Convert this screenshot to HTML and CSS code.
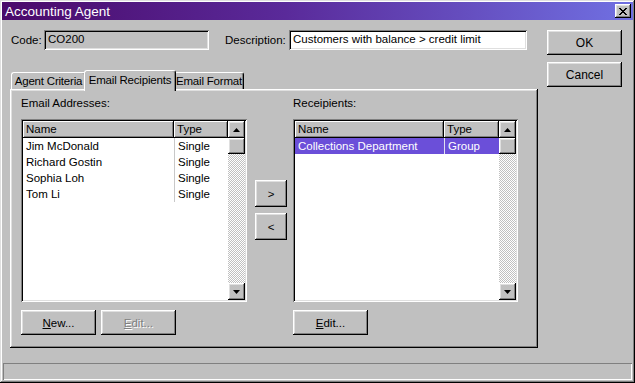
FILE: index.html
```html
<!DOCTYPE html>
<html lang="en">
<head>
    <meta charset="UTF-8">
    <title>Accounting Agent</title>
    <link rel="stylesheet" href="styles.css">
</head>
<body>
    <div class="window">
        <div class="titlebar">
            <div class="title">Accounting Agent</div>
            <div class="close bevel-up">
                <svg width="8" height="7" viewBox="0 0 8 7"><path d="M0 0L7 7M1 0L8 7M7 0L0 7M8 0L1 7" stroke="#000" stroke-width="1"/></svg>
            </div>
        </div>

        <div class="main">
            <div class="left">
                <div class="fields">
                    <span class="lbl code-lbl">Code:</span>
                    <div class="input code-input">CO200</div>
                    <span class="lbl desc-lbl">Description:</span>
                    <div class="input desc-input">Customers with balance &gt; credit limit</div>
                </div>

                <div class="tabs">
                    <div class="tab tab-criteria">Agent Criteria</div>
                    <div class="tab tab-recipients active">Email Recipients</div>
                    <div class="tab tab-format">Email Format</div>
                </div>

                <div class="panel bevel-up">
                    <div class="col col-left">
                        <div class="group-lbl">Email Addresses:</div>
                        <div class="listbox">
                            <div class="list-body">
                                <div class="list-head">
                                    <div class="hcell name">Name</div>
                                    <div class="hcell type">Type</div>
                                </div>
                                <div class="row"><div class="cell name">Jim McDonald</div><div class="cell type">Single</div></div>
                                <div class="row"><div class="cell name">Richard Gostin</div><div class="cell type">Single</div></div>
                                <div class="row"><div class="cell name">Sophia Loh</div><div class="cell type">Single</div></div>
                                <div class="row"><div class="cell name">Tom Li</div><div class="cell type">Single</div></div>
                            </div>
                            <div class="scrollbar">
                                <div class="sbtn bevel-up"><svg width="7" height="4" viewBox="0 0 7 4"><polygon points="3.5,0 7,4 0,4" fill="#000"/></svg></div>
                                <div class="thumb bevel-up"></div>
                                <div class="track"></div>
                                <div class="sbtn bevel-up"><svg width="7" height="4" viewBox="0 0 7 4"><polygon points="0,0 7,0 3.5,4" fill="#000"/></svg></div>
                            </div>
                        </div>
                        <div class="btn-row">
                            <div class="btn bevel-up"><u>N</u>ew...</div>
                            <div class="btn bevel-up disabled"><u>E</u>dit...</div>
                        </div>
                    </div>

                    <div class="col col-mid">
                        <div class="btn small bevel-up">&gt;</div>
                        <div class="btn small bevel-up">&lt;</div>
                    </div>

                    <div class="col col-right">
                        <div class="group-lbl">Receipients:</div>
                        <div class="listbox">
                            <div class="list-body">
                                <div class="list-head">
                                    <div class="hcell name">Name</div>
                                    <div class="hcell type">Type</div>
                                </div>
                                <div class="row selected"><div class="cell name">Collections Department</div><div class="cell type">Group</div></div>
                            </div>
                            <div class="scrollbar">
                                <div class="sbtn bevel-up"><svg width="7" height="4" viewBox="0 0 7 4"><polygon points="3.5,0 7,4 0,4" fill="#000"/></svg></div>
                                <div class="thumb bevel-up"></div>
                                <div class="track"></div>
                                <div class="sbtn bevel-up"><svg width="7" height="4" viewBox="0 0 7 4"><polygon points="0,0 7,0 3.5,4" fill="#000"/></svg></div>
                            </div>
                        </div>
                        <div class="btn-row">
                            <div class="btn bevel-up"><u>E</u>dit...</div>
                        </div>
                    </div>
                </div>
            </div>

            <div class="side">
                <div class="btn big bevel-up">OK</div>
                <div class="btn big bevel-up">Cancel</div>
            </div>
        </div>

        <div class="statusbar"></div>
    </div>
</body>
</html>
```

FILE: styles.css
```css
body {
    margin: 0;
    font-family: 'Liberation Sans', Arial, sans-serif;
    font-size: 11px;
    color: #000;
    background-color: #c0c0c0;
}

.window {
    width: 635px;
    height: 383px;
    box-sizing: border-box;
    padding: 2px;
    background-color: #c0c0c0;
    box-shadow: inset -1px -1px #000, inset 1px 1px #dfdfdf, inset -2px -2px #808080, inset 2px 2px #fff;
}

.bevel-up {
    background-color: #c0c0c0;
    box-shadow: inset -1px -1px #000, inset 1px 1px #fff, inset -2px -2px #808080, inset 2px 2px #dfdfdf;
}

.titlebar {
    height: 18px;
    display: flex;
    justify-content: space-between;
    align-items: center;
    padding: 0 2px 0 3px;
    background: linear-gradient(to right, #4a0a6a 0%, #5a2a9a 45%, #7070e2 100%);
}
.title {
    color: #fff;
    font-size: 13.5px;
}
.close {
    width: 16px;
    height: 14px;
    display: flex;
    align-items: center;
    justify-content: center;
}
.close svg { margin-left: -1px; }

.main {
    display: flex;
    padding: 10px 0 0 8px;
}
.left { width: 528px; }

.fields {
    height: 20px;
    display: flex;
    align-items: center;
}
.lbl { font-size: 11.5px; }
.code-lbl { width: 33px; padding-left: 1px; }
.desc-lbl { width: 64px; margin-left: 16px; }
.input {
    height: 20px;
    box-sizing: border-box;
    padding: 3px 4px;
    font-size: 11.5px;
    box-shadow: inset 1px 1px #808080, inset -1px -1px #fff, inset 2px 2px #000, inset -2px -2px #dfdfdf;
}
.code-input { width: 165px; background-color: #c0c0c0; }
.desc-input { width: 238px; background-color: #fff; }

.tabs {
    display: flex;
    align-items: flex-end;
    height: 19px;
    margin-top: 20px;
    padding-left: 1px;
}
.tab {
    height: 17px;
    box-sizing: border-box;
    padding-top: 2px;
    text-align: center;
    white-space: nowrap;
    font-size: 11.5px;
    letter-spacing: -0.2px;
    border: 1px solid #fff;
    border-right-color: #000;
    border-bottom: none;
    border-radius: 3px 3px 0 0;
    box-shadow: inset -1px 0 #808080;
}
.tab-criteria { width: 75px; }
.tab-recipients { width: 92px; }
.tab-format { width: 70px; }
.tab.active {
    height: 21px;
    margin: 0 -2px -2px -2px;
    padding-top: 3px;
    background-color: #c0c0c0;
    position: relative;
    z-index: 1;
}

.panel {
    width: 528px;
    height: 259px;
    box-sizing: border-box;
    padding: 8px 0 0 11px;
    display: flex;
}
.col { display: flex; flex-direction: column; }
.col-left { width: 226px; }
.col-mid { width: 32px; margin-left: 8px; padding-top: 83px; gap: 6px; }
.col-right { width: 225px; margin-left: 6px; }

.group-lbl {
    height: 14px;
    margin-bottom: 8px;
    font-size: 11.5px;
}

.listbox {
    height: 183px;
    box-sizing: border-box;
    padding: 2px;
    display: flex;
    background-color: #fff;
    box-shadow: inset 1px 1px #808080, inset -1px -1px #fff, inset 2px 2px #000, inset -2px -2px #dfdfdf;
}
.list-body { flex: 1; }
.list-head { display: flex; height: 17px; }
.hcell {
    box-sizing: border-box;
    padding: 2px 3px;
    font-size: 11.5px;
    background-color: #c0c0c0;
    box-shadow: inset -1px -1px #000, inset 1px 1px #fff, inset -2px -2px #808080;
}
.col-left .name { width: 151px; }
.col-left .type { width: 54px; }
.col-right .name { width: 149px; }
.col-right .type { width: 55px; }

.row { display: flex; height: 16px; }
.cell {
    box-sizing: border-box;
    padding: 2px 3px;
    font-size: 11.5px;
}
.row .type { border-left: 1px solid #c8c8c8; }
.row.selected { background-color: #6b4fd9; color: #fff; }
.row.selected .type { border-left-color: #e0e0f0; }

.scrollbar {
    width: 17px;
    display: flex;
    flex-direction: column;
}
.sbtn {
    height: 17px;
    display: flex;
    align-items: center;
    justify-content: center;
}
.thumb { height: 16px; }
.track {
    flex: 1;
    background: repeating-conic-gradient(#c0c0c0 0 25%, #fff 0 50%) 0 0 / 2px 2px;
}

.btn-row { display: flex; gap: 5px; margin-top: 8px; }
.btn {
    width: 75px;
    height: 25px;
    box-sizing: border-box;
    display: flex;
    align-items: center;
    justify-content: center;
    font-size: 11.5px;
}
.btn.disabled { color: #808080; text-shadow: 1px 1px #fff; }
.btn.small { width: 32px; height: 27px; }

.side {
    display: flex;
    flex-direction: column;
    gap: 7px;
    margin-left: 9px;
}
.btn.big { width: 75px; height: 25px; font-size: 12px; }

.statusbar {
    height: 17px;
    margin: 15px 1px 0 1px;
    box-sizing: border-box;
    box-shadow: inset 1px 1px #808080, inset -1px -1px #fff;
}
```
